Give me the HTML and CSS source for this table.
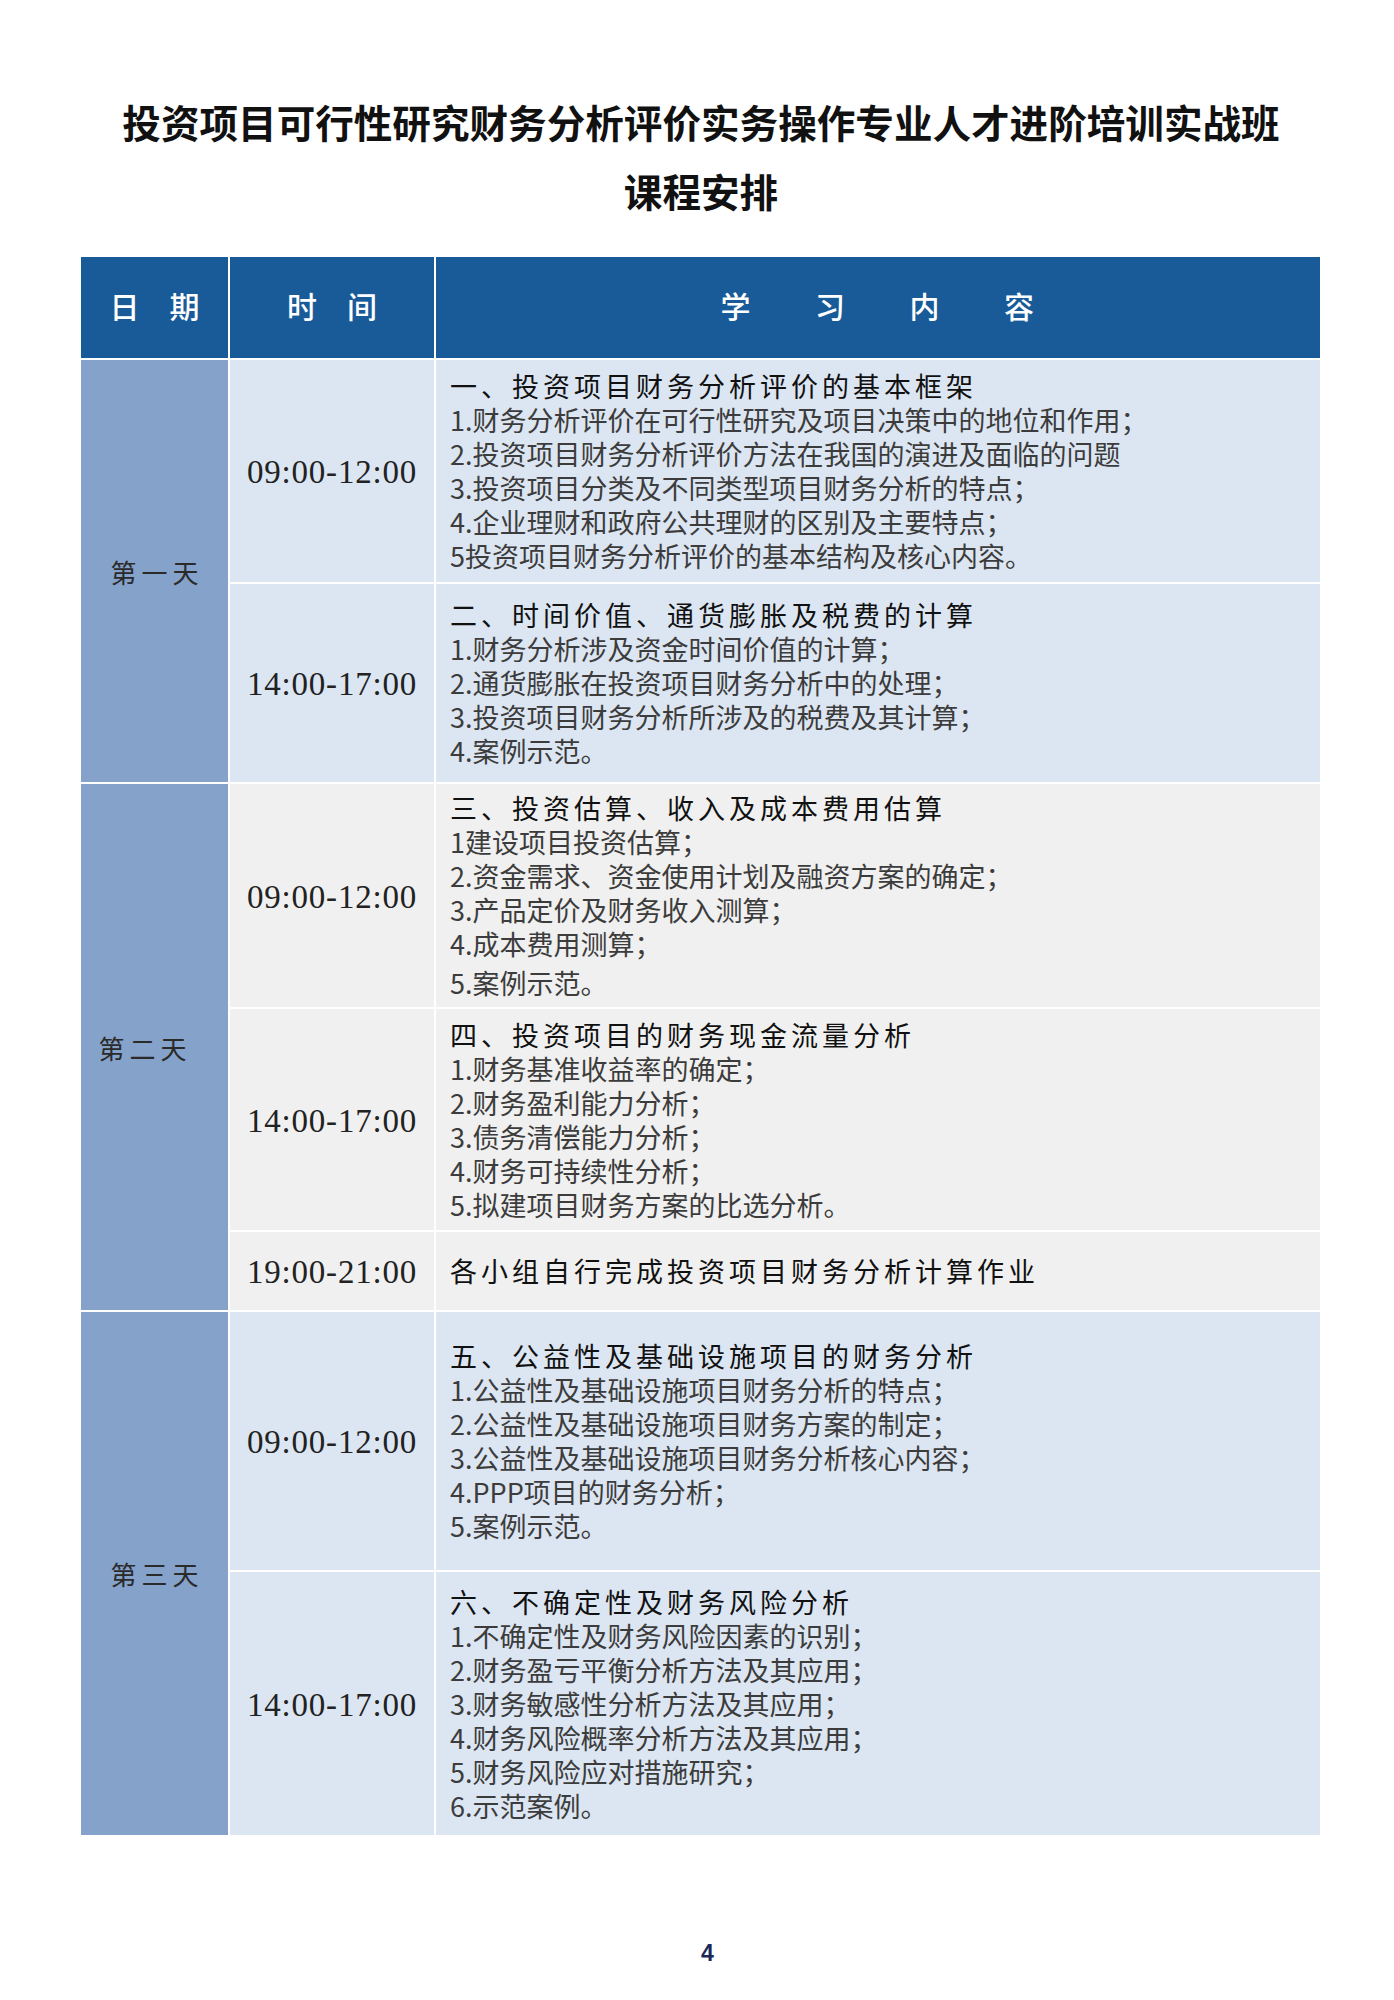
FILE: index.html
```html
<!DOCTYPE html>
<html lang="zh-CN">
<head>
<meta charset="utf-8">
<title>课程安排</title>
<link rel="stylesheet" href="styles.css">
</head>
<body>
<div class="page">
  <h1 class="title">投资项目可行性研究财务分析评价实务操作专业人才进阶培训实战班<br>课程安排</h1>

  <div class="schedule">
    <div class="hd">日　期</div>
    <div class="hd">时　间</div>
    <div class="hd wide">学　　习　　内　　容</div>

    <div class="day span2">第一天</div>
    <div class="time blue">09:00-12:00</div>
    <div class="content blue">
      <p class="topic">一、投资项目财务分析评价的基本框架</p>
      <p class="item">1.财务分析评价在可行性研究及项目决策中的地位和作用；</p>
      <p class="item">2.投资项目财务分析评价方法在我国的演进及面临的问题</p>
      <p class="item">3.投资项目分类及不同类型项目财务分析的特点；</p>
      <p class="item">4.企业理财和政府公共理财的区别及主要特点；</p>
      <p class="item">5投资项目财务分析评价的基本结构及核心内容。</p>
    </div>
    <div class="time blue">14:00-17:00</div>
    <div class="content blue">
      <p class="topic">二、时间价值、通货膨胀及税费的计算</p>
      <p class="item">1.财务分析涉及资金时间价值的计算；</p>
      <p class="item">2.通货膨胀在投资项目财务分析中的处理；</p>
      <p class="item">3.投资项目财务分析所涉及的税费及其计算；</p>
      <p class="item">4.案例示范。</p>
    </div>

    <div class="day span3 shift">第二天</div>
    <div class="time gray">09:00-12:00</div>
    <div class="content gray">
      <p class="topic">三、投资估算、收入及成本费用估算</p>
      <p class="item">1建设项目投资估算；</p>
      <p class="item">2.资金需求、资金使用计划及融资方案的确定；</p>
      <p class="item">3.产品定价及财务收入测算；</p>
      <p class="item">4.成本费用测算；</p>
      <p class="item extra">5.案例示范。</p>
    </div>
    <div class="time gray">14:00-17:00</div>
    <div class="content gray">
      <p class="topic">四、投资项目的财务现金流量分析</p>
      <p class="item">1.财务基准收益率的确定；</p>
      <p class="item">2.财务盈利能力分析；</p>
      <p class="item">3.债务清偿能力分析；</p>
      <p class="item">4.财务可持续性分析；</p>
      <p class="item">5.拟建项目财务方案的比选分析。</p>
    </div>
    <div class="time gray">19:00-21:00</div>
    <div class="content gray">
      <p class="topic">各小组自行完成投资项目财务分析计算作业</p>
    </div>

    <div class="day span2">第三天</div>
    <div class="time blue">09:00-12:00</div>
    <div class="content blue">
      <p class="topic">五、公益性及基础设施项目的财务分析</p>
      <p class="item">1.公益性及基础设施项目财务分析的特点；</p>
      <p class="item">2.公益性及基础设施项目财务方案的制定；</p>
      <p class="item">3.公益性及基础设施项目财务分析核心内容；</p>
      <p class="item">4.PPP项目的财务分析；</p>
      <p class="item">5.案例示范。</p>
    </div>
    <div class="time blue">14:00-17:00</div>
    <div class="content blue">
      <p class="topic">六、不确定性及财务风险分析</p>
      <p class="item">1.不确定性及财务风险因素的识别；</p>
      <p class="item">2.财务盈亏平衡分析方法及其应用；</p>
      <p class="item">3.财务敏感性分析方法及其应用；</p>
      <p class="item">4.财务风险概率分析方法及其应用；</p>
      <p class="item">5.财务风险应对措施研究；</p>
      <p class="item">6.示范案例。</p>
    </div>
  </div>

  <div class="page-num">4</div>
</div>
</body>
</html>
```

FILE: styles.css
```css
* {
  box-sizing: border-box;
}

body {
  margin: 0;
  background: #ffffff;
  font-family: "Noto Sans CJK SC", "Noto Sans", sans-serif;
  color: #222;
}

.page {
  width: 1394px;
  padding: 87px 0 0 81px;
}

.title {
  margin: 0 0 32px -81px;
  padding-left: 8px;
  width: 1394px;
  text-align: center;
  font-family: "Noto Sans CJK SC", sans-serif;
  font-weight: 700;
  font-size: 38.6px;
  line-height: 69px;
  color: #111;
}

.schedule {
  display: grid;
  width: 1239px;
  grid-template-columns: 147px 204px 884px;
  grid-template-rows: 101px 222px 198px 223px 221px 78px 258px 263px;
  gap: 2px;
  background: #ffffff;
}

.hd {
  background: #195b99;
  color: #ffffff;
  display: flex;
  align-items: center;
  justify-content: center;
  padding-bottom: 5px;
  font-size: 30px;
  font-weight: 500;
  white-space: pre;
}

.hd.wide {
  letter-spacing: 1.5px;
}

.day {
  background: #85a2ca;
  display: flex;
  align-items: center;
  justify-content: center;
  font-size: 26px;
  letter-spacing: 5px;
  padding-left: 5px;
  color: #2a2a2a;
}

.day.shift {
  padding-right: 24px;
}

.span2 {
  grid-row: span 2;
}

.span3 {
  grid-row: span 3;
}

.blue {
  background: #dce6f2;
}

.gray {
  background: #f0f0f0;
}

.time {
  display: flex;
  align-items: center;
  justify-content: center;
  font-family: "Liberation Serif", "DejaVu Serif", serif;
  font-size: 33px;
  letter-spacing: 0.8px;
  color: #222;
  padding: 3px 0 0 0;
}

.content {
  display: flex;
  flex-direction: column;
  justify-content: center;
  padding-left: 14px;
}

.content p {
  margin: 0;
  white-space: nowrap;
}

.topic {
  font-size: 27px;
  letter-spacing: 4px;
  line-height: 34px;
  color: #111;
}

.item {
  font-size: 27px;
  line-height: 34px;
  color: #3c3c3c;
}

.item.extra {
  margin-top: 5px;
}

.page-num {
  margin-top: 103px;
  padding-left: 620px;
  font-family: "Liberation Sans", Arial, sans-serif;
  font-weight: 700;
  font-size: 23px;
  line-height: 30px;
  color: #1d2857;
}
```
